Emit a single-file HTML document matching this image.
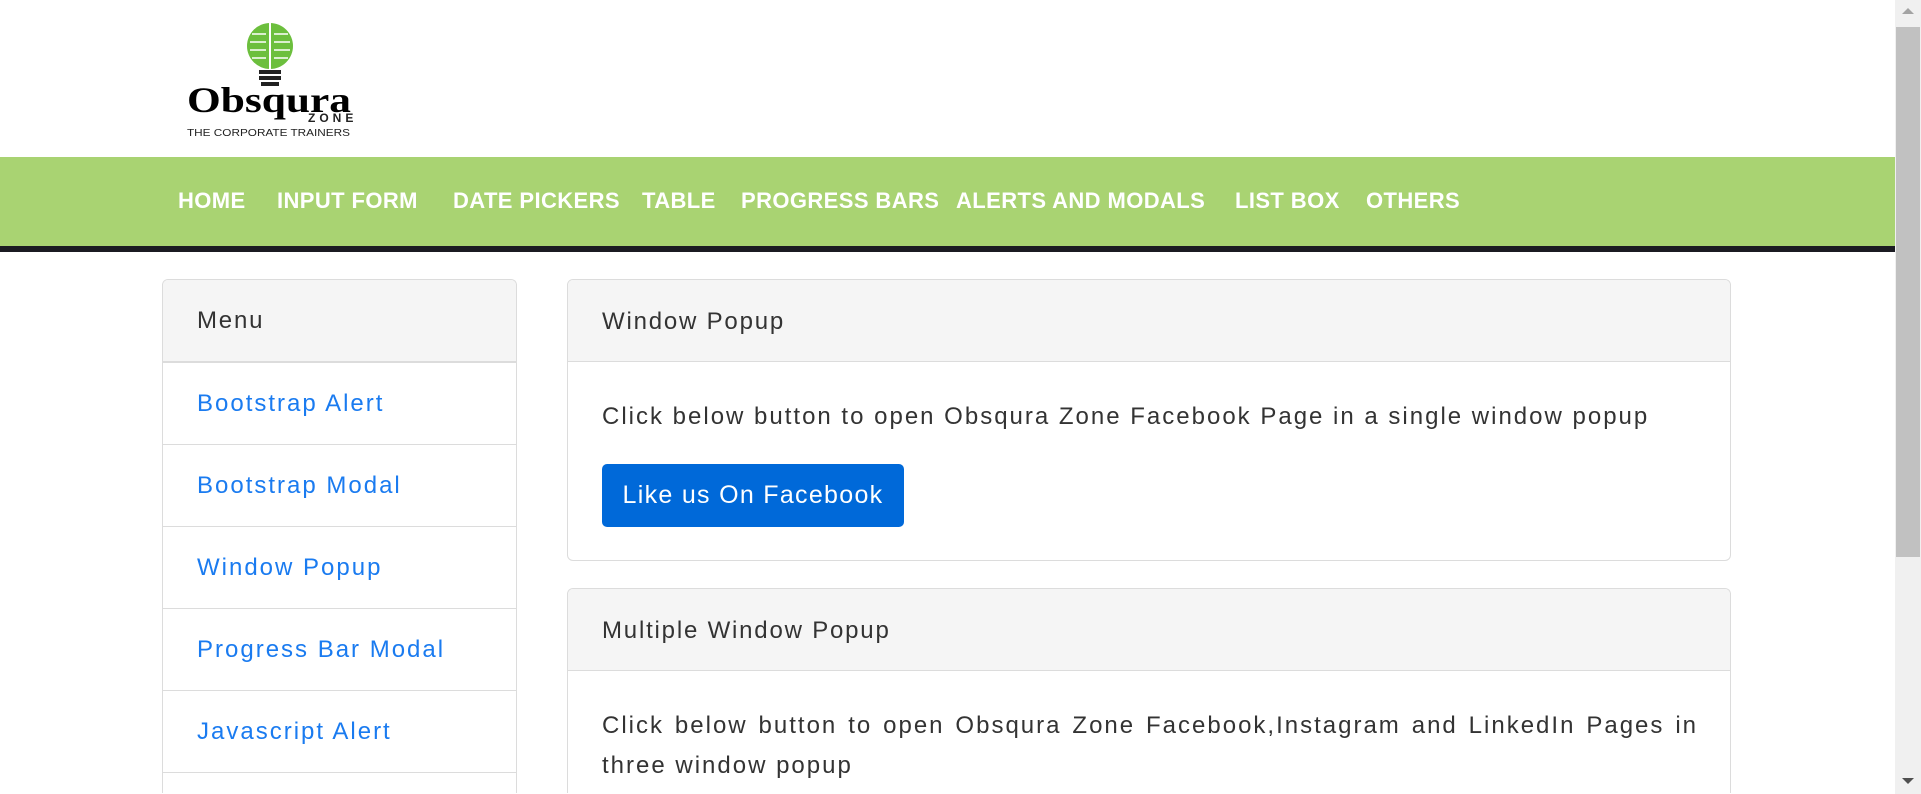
<!DOCTYPE html>
<html><head><meta charset="utf-8"><style>
*{margin:0;padding:0;box-sizing:border-box}
html,body{width:1921px;height:794px;overflow:hidden;background:#fff;font-family:"Liberation Sans",sans-serif;color:#333}
.abs{position:absolute}
#nav{left:0;top:157px;width:1895px;height:89px;background:#a9d372}
#bar{left:0;top:246px;width:1895px;height:6px;background:#1b1b22}
.nv{position:absolute;top:188px;color:#fff;font-weight:bold;font-size:22px;letter-spacing:0.4px;white-space:nowrap;line-height:26px}
.card{position:absolute;border:1px solid #dcdcdc;border-radius:6px;background:#fff;overflow:hidden}
.hd{background:#f5f5f5;border-bottom:1px solid #dcdcdc;font-size:24px;letter-spacing:1.8px;color:#333;padding-left:34px}
.item{position:absolute;left:0;width:100%;height:82px;border-top:1px solid #dcdcdc;color:#1a7bf0;font-size:24px;letter-spacing:2px;padding-left:34px;line-height:82px}
p{font-size:24px;letter-spacing:2px;color:#333}
#sb{left:1895px;top:0;width:26px;height:794px;background:#f0f0f0}
#thumb{left:1896px;top:27px;width:24px;height:530px;background:#c1c1c1}
</style></head><body>
<svg class="abs" style="left:180px;top:14px" width="180" height="126" viewBox="0 0 180 126">
<circle cx="90" cy="32" r="23" fill="#6cbf3d"/>
<rect x="89" y="9" width="2" height="46" fill="#fff"/>
<g stroke="#fff" stroke-width="1.6" fill="none">
<path d="M72 20h14M70 28h16M70 36h16M72 44h14M94 20h14M94 28h16M94 36h16M94 44h14"/></g>
<rect x="79" y="56" width="22" height="4" fill="#222"/><rect x="79" y="62" width="22" height="4" fill="#222"/><rect x="81" y="68" width="18" height="4" fill="#222"/>
<text x="7" y="98" font-family="Liberation Serif,serif" font-weight="bold" font-size="36" fill="#000" textLength="164" lengthAdjust="spacingAndGlyphs">Obsqura</text>
<text x="128" y="108" font-family="Liberation Sans,sans-serif" font-weight="bold" font-size="12" fill="#222" letter-spacing="4">ZONE</text>
<text x="7" y="122" font-family="Liberation Sans,sans-serif" font-size="10" fill="#222" textLength="163" lengthAdjust="spacingAndGlyphs">THE CORPORATE TRAINERS</text>
</svg>
<div id="nav" class="abs"></div><div id="bar" class="abs"></div>
<div class="nv" style="left:178px">HOME</div>
<div class="nv" style="left:277px">INPUT FORM</div>
<div class="nv" style="left:453px">DATE PICKERS</div>
<div class="nv" style="left:642px">TABLE</div>
<div class="nv" style="left:741px">PROGRESS BARS</div>
<div class="nv" style="left:956px">ALERTS AND MODALS</div>
<div class="nv" style="left:1235px">LIST BOX</div>
<div class="nv" style="left:1366px">OTHERS</div>

<div class="card" style="left:162px;top:279px;width:355px;height:514px;border-bottom:none;border-radius:6px 6px 0 0">
<div class="hd" style="height:82px;line-height:82px">Menu</div>
<div class="item" style="top:82px">Bootstrap Alert</div>
<div class="item" style="top:164px">Bootstrap Modal</div>
<div class="item" style="top:246px">Window Popup</div>
<div class="item" style="top:328px">Progress Bar Modal</div>
<div class="item" style="top:410px">Javascript Alert</div>
<div class="item" style="top:492px;height:22px"></div>
</div>

<div class="card" style="left:567px;top:279px;width:1164px;height:282px">
<div class="hd" style="height:82px;line-height:84px">Window Popup</div>
<p class="abs" style="left:34px;top:122px;line-height:30px;white-space:nowrap">Click below button to open Obsqura Zone Facebook Page in a single window popup</p>
<div class="abs" style="left:34px;top:184px;width:302px;height:63px;background:#0069d9;border-radius:5px;color:#fff;font-size:25px;letter-spacing:1.3px;line-height:63px;text-align:center">Like us On Facebook</div>
</div>

<div class="card" style="left:567px;top:588px;width:1164px;height:205px;border-bottom:none;border-radius:6px 6px 0 0">
<div class="hd" style="height:82px;line-height:84px">Multiple Window Popup</div>
<p class="abs" style="left:34px;top:117px;width:1096px;line-height:40px;text-align:justify;text-align-last:left">Click below button to open Obsqura Zone Facebook,Instagram and LinkedIn Pages in three window popup</p>
</div>

<div id="sb" class="abs"></div><div id="thumb" class="abs"></div>
<svg class="abs" style="left:1900px;top:6px" width="16" height="10"><path d="M2 8L8 2L14 8Z" fill="#a3a3a3"/></svg>
<svg class="abs" style="left:1900px;top:776px" width="16" height="10"><path d="M2 2L8 8L14 2Z" fill="#505050"/></svg>
</body></html>
